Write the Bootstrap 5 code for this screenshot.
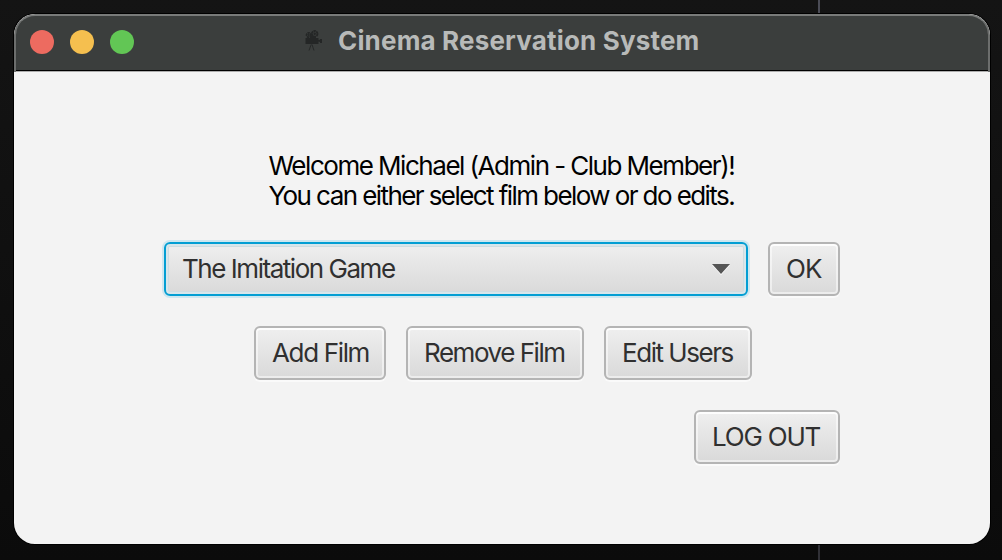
<!DOCTYPE html>
<html lang="en">
<head>
<meta charset="utf-8">
<meta name="viewport" content="width=device-width, initial-scale=1">
<title>Cinema Reservation System</title>
<link href="https://cdn.jsdelivr.net/npm/bootstrap@5.3.0/dist/css/bootstrap.min.css" rel="stylesheet">
<style>
body{height:560px;overflow:hidden;background:#141414;font-family:Inter,"Liberation Sans",sans-serif;font-size:26px;line-height:30px;color:#000}
.desk{height:560px;padding:14px 12px 16px 14px;background:linear-gradient(90deg,#0000 818px,#4b4c56 818px,#4b4c56 820px,#0000 820px) 0 0/100% 13px no-repeat,linear-gradient(90deg,#0000 818px,#303036 818px,#303036 820px,#0000 820px) 0 545px/100% 15px no-repeat,linear-gradient(#141414,#0b0b0b)}
.win{height:530px;border-radius:21px;background:#f3f3f3;box-shadow:0 0 0 1px #000}
.titlebar{height:58px;flex:none;background:#3b3e3d;border:2px solid #6c6e6d;border-top-color:#797b7a;border-bottom:0;border-radius:21px 21px 0 0;box-shadow:inset 0 -1px #adadad,inset 0 -2px #000;padding:0 14px 4px}
.dots{gap:16px}
.dot{width:24px;height:24px;border-radius:50%}
.dot-close{background:#ed6b60}
.dot-min{background:#f5bf4f}
.dot-max{background:#62c655}
.camera{margin-left:171px;margin-top:-2px}
.caption{color:#b8bab9;font-weight:700;letter-spacing:.17px;white-space:nowrap;margin:-3px 0 0 15px}
.body-area{width:676px;margin:79px auto 0}
.welcome{margin:0 0 31px 104.5px;white-space:nowrap}
.line-one{letter-spacing:-1.45px;word-spacing:-.3px}
.line-two{letter-spacing:-1.58px}
.controls{gap:20px}
.edits{margin:30px 0 30px 90px}
.fx{height:54px;border:2px solid #b4b4b4;border-radius:6px;background:linear-gradient(#efefef,#d9d9d9);box-shadow:inset 0 0 0 2px #ffffff80,inset 0 2px #ffffffb0,0 2px #fafafa;color:#303030;font-size:26px;line-height:30px;padding:0 0 0 16px;text-align:left;white-space:nowrap;letter-spacing:-1.46px}
.combo{width:584px;border-color:#039ed3;box-shadow:0 0 0 2px #cde7f0,inset 0 0 0 2px #d7e6eb,inset 0 0 0 3px #cedce1;padding-right:16px}
.w-ok{width:72px;letter-spacing:-.8px}
.w-add{width:132px;letter-spacing:-1.35px}
.w-remove{width:178px}
.w-users{width:148px}
.w-logout{width:146px;letter-spacing:-1.2px}
</style>
</head>
<body>
<div class="desk">
<main class="win d-flex flex-column overflow-hidden">
  <header class="titlebar d-flex align-items-center">
    <div class="dots d-flex">
      <span class="dot dot-close"></span><span class="dot dot-min"></span><span class="dot dot-max"></span>
    </div>
    <svg class="camera" width="18" height="22" viewBox="0 0 18 22" fill="none" stroke="#242626">
      <circle cx="3.8" cy="5" r="2.2" stroke-width="1.8" stroke-dasharray="2.2 .5"/><circle cx="9.7" cy="3.8" r="2.8" stroke-width="1.9" stroke-dasharray="2.4 .5"/>
      <circle cx="3.8" cy="5" r="1" fill="#242626" stroke="none"/><circle cx="9.7" cy="3.8" r="1.2" fill="#242626" stroke="none"/>
      <path d="M5 6h6v2H5zM.5 8h13v2l1.5-.3V9h2v4h-2v-1l-1.500-.5V14H.5z" fill="#242626" stroke="none"/>
      <path d="M6.200 14.500 4 20.500M7 14.500l2 6" stroke-width=".9"/>
    </svg>
    <span class="caption">Cinema Reservation System</span>
  </header>
  <section class="body-area">
    <div class="welcome">
      <div class="line-one">Welcome Michael (Admin - Club Member)!</div>
      <div class="line-two">You can either select film below or do edits.</div>
    </div>
    <div class="controls d-flex">
      <button class="fx combo d-flex align-items-center justify-content-between">The Imitation Game
        <svg width="18" height="11" viewBox="0 0 18 11"><path d="M0 1h18L9 11z" fill="#fff"/><path d="M0 0h18L9 10z" fill="#555"/></svg>
      </button>
      <button class="fx w-ok">OK</button>
    </div>
    <div class="controls edits d-flex">
      <button class="fx w-add">Add Film</button>
      <button class="fx w-remove">Remove Film</button>
      <button class="fx w-users">Edit Users</button>
    </div>
    <div class="d-flex justify-content-end">
      <button class="fx w-logout">LOG OUT</button>
    </div>
  </section>
</main>
</div>
<script src="https://cdn.jsdelivr.net/npm/bootstrap@5.3.0/dist/js/bootstrap.bundle.min.js"></script>
</body>
</html>
